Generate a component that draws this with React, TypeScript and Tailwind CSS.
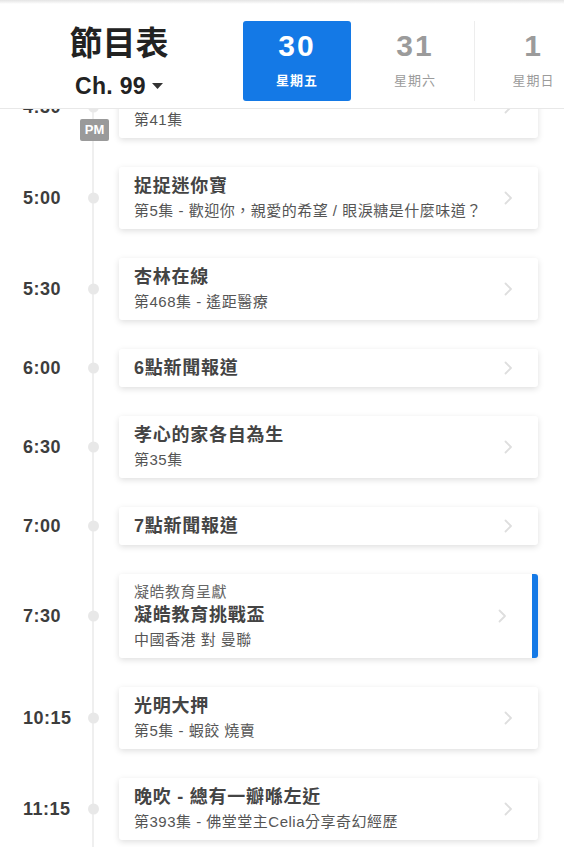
import React from 'react';

interface Programme {
    time: string;
    title: string;
    sub?: string;
    pre?: string;
    active?: boolean;
    pm?: boolean;
}

// first row is scrolled under the header, only its episode line shows
const programmes: Programme[] = [
    { time: '4:30', title: '', sub: '第41集', pm: true },
    { time: '5:00', title: '捉捉迷你寶', sub: '第5集 - 歡迎你，親愛的希望 / 眼淚糖是什麼味道？' },
    { time: '5:30', title: '杏林在線', sub: '第468集 - 遙距醫療' },
    { time: '6:00', title: '6點新聞報道' },
    { time: '6:30', title: '孝心的家各自為生', sub: '第35集' },
    { time: '7:00', title: '7點新聞報道' },
    { time: '7:30', pre: '凝皓教育呈獻', title: '凝皓教育挑戰盃', sub: '中國香港 對 曼聯', active: true },
    { time: '10:15', title: '光明大押', sub: '第5集 - 蝦餃 燒賣' },
    { time: '11:15', title: '晚吹 - 總有一瓣喺左近', sub: '第393集 - 佛堂堂主Celia分享奇幻經歷' },
];

const days = [
    { date: '30', label: '星期五', active: true },
    { date: '31', label: '星期六' },
    { date: '1', label: '星期日' },
];

function Chevron() {
    return (
        <svg width="9" height="14" viewBox="0 0 9 14" fill="none" className="shrink-0">
            <polyline points="1.5,1.5 7,7 1.5,12.5" stroke="#dedede" strokeWidth="1.8" strokeLinecap="round" strokeLinejoin="round" />
        </svg>
    );
}

function Header() {
    return (
        <div className="relative z-10 bg-white h-[109px] border-b border-[#e8e8e8] overflow-hidden">
            <div className="absolute top-0 left-0 right-0 h-[4px] bg-gradient-to-b from-[#e4e4e4] to-white" />
            <div className="flex h-full">
                <div className="w-[238px] shrink-0 flex flex-col items-center">
                    <h1 className="mt-[24px] text-[33px] leading-[40px] font-semibold text-[#222]">節目表</h1>
                    <div className="mt-[8px] flex items-center text-[23px] leading-[28px] font-bold text-[#222] tracking-[0.3px]">
                        Ch. 99
                        <svg width="11" height="6" viewBox="0 0 11 6" className="ml-[6px]">
                            <polygon points="0,0 11,0 5.5,6" fill="#333" />
                        </svg>
                    </div>
                </div>
                <div className="flex shrink-0 pt-[21px]">
                    {days.map((d, i) => (
                        <div
                            key={d.date}
                            className={`w-[118px] shrink-0 h-[80px] px-[5px] ${i === 2 ? 'border-l border-[#ededed]' : ''}`}
                        >
                            <div
                                className={`h-full flex flex-col items-center rounded-[3px] ${d.active ? 'bg-[#1479e6] text-white' : 'text-[#9b9b9b]'}`}
                            >
                                <span className="mt-[10px] text-[30px] leading-[30px] font-bold tracking-[2px]">{d.date}</span>
                                <span className={`mt-[12px] text-[13px] leading-[16px] tracking-[1px] ${d.active ? 'font-bold' : ''}`}>
                                    {d.label}
                                </span>
                            </div>
                        </div>
                    ))}
                </div>
            </div>
        </div>
    );
}

export default function App() {
    return (
        <div className="w-full h-[847px] overflow-hidden bg-white font-['Liberation_Sans','Noto_Sans_CJK_TC',sans-serif]">
            <Header />
            <div className="relative -mt-[33px]">
                {/* timeline */}
                <div className="absolute left-[92px] top-0 w-[2px] h-[900px] bg-[#efefef]" />
                <div className="flex flex-col gap-[29px]">
                    {programmes.map(p => (
                        <div key={p.time} className="flex">
                            <div className="relative w-[119px] shrink-0 flex items-center">
                                <span className="pl-[23px] text-[18px] font-bold tracking-[0.5px] text-[#3d3d3d]">{p.time}</span>
                                <div className="absolute left-[88px] top-1/2 -translate-y-1/2 w-[11px] h-[11px] rounded-full bg-[#e8e8e8]" />
                                {p.pm && (
                                    <div className="absolute left-[80px] top-[43px] w-[29px] h-[22px] rounded-[2px] bg-[#9a9a9a] text-white text-[13px] font-bold flex items-center justify-center">
                                        PM
                                    </div>
                                )}
                            </div>
                            <div
                                className={`w-[419px] shrink-0 flex items-center justify-between bg-white rounded-[3px] shadow-[0_2px_6px_rgba(0,0,0,0.13)] pl-[15px] pr-[25px] py-[7px] ${p.active ? 'border-r-[6px] border-[#1479e6]' : ''}`}
                            >
                                <div className="flex flex-col">
                                    {p.pre && (
                                        <span className="text-[15px] leading-[22px] tracking-[0.5px] text-[#666]">{p.pre}</span>
                                    )}
                                    <span className="min-h-[24px] text-[18px] leading-[24px] font-bold tracking-[0.75px] text-[#444]">{p.title}</span>
                                    {p.sub && (
                                        <span className="mt-[2px] text-[15px] leading-[22px] tracking-[0.5px] text-[#555]">{p.sub}</span>
                                    )}
                                </div>
                                <Chevron />
                            </div>
                        </div>
                    ))}
                </div>
            </div>
        </div>
    );
}
